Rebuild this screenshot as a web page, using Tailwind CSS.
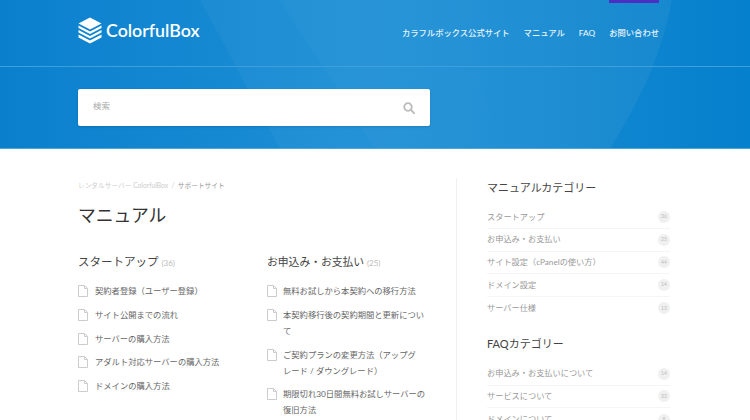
<!DOCTYPE html>
<html lang="ja">
<head>
<meta charset="UTF-8">
<title>マニュアル - ColorfulBox</title>
<script src="https://cdn.jsdelivr.net/npm/@tailwindcss/browser@4"></script>
</head>
<body class="h-[420px] overflow-hidden bg-white font-['Lato','Noto_Sans_CJK_JP',sans-serif]">

<!-- hero -->
<header class="relative h-[149px] overflow-hidden bg-gradient-to-r from-[#0a80cd] via-[#1c8fd6] to-[#0580cc] border-b border-[#4aa8e0]">
  <svg class="absolute inset-0" width="750" height="149" viewBox="0 0 750 149" fill="none">
    <path d="M200 0L280 149H610C640 100 660 60 672 0Z" fill="#fff" fill-opacity="0.035"/>
    <path d="M280 0L375 149H500L450 0Z" fill="#fff" fill-opacity="0.02"/>
    <path d="M450 0C470 60 480 100 500 149H610C640 100 665 50 672 0Z" fill="#fff" fill-opacity="0.02"/>
  </svg>
  <div class="relative h-[67px] border-b border-[#3d9fdc]">
    <div class="flex h-full items-center justify-between pl-[78px] pr-[91px]">
      <a class="mb-[5px] flex items-center gap-[4px] text-white" href="#">
        <svg width="24" height="27" viewBox="0 0 24 27" fill="none">
          <path d="M12 0.5L23.5 6.5L12 12.5L0.5 6.5Z" fill="#fff"/>
          <path d="M0.5 8.5L12 14.5L23.5 8.5V11L12 17L0.5 11Z" fill="#fff"/>
          <path d="M0.5 13L12 19L23.5 13V15.5L12 21.5L0.5 15.5Z" fill="#fff"/>
          <path d="M0.5 17.5L12 23.5L23.5 17.5V20.5L12 26.5L0.5 20.5Z" fill="#fff"/>
        </svg>
        <span class="text-[17.8px] font-semibold leading-none">ColorfulBox</span>
      </a>
      <nav class="flex gap-[14px] text-[8.3px] font-medium text-white/90">
        <a href="#">カラフルボックス公式サイト</a>
        <a href="#">マニュアル</a>
        <a href="#">FAQ</a>
        <a href="#">お問い合わせ</a>
      </nav>
    </div>
    <div class="absolute right-[91px] top-0 h-[3px] w-[50px] bg-[#4a2fc0]"></div>
  </div>
  <div class="relative pl-[78px] pt-[22px]">
    <div class="flex h-[37px] w-[352px] items-center justify-between rounded-[2px] bg-white pl-[15px] pr-[15px] shadow-sm">
      <span class="mb-[3px] text-[8.5px] text-[#aaa]">検索</span>
      <svg class="mt-[1px]" width="12" height="12" viewBox="0 0 12 12" fill="none" stroke="#bbb" stroke-width="1.8">
        <circle cx="5" cy="5" r="3.8"/>
        <path d="M8 8L11.3 11.3" stroke-linecap="round"/>
      </svg>
    </div>
  </div>
</header>

<div class="flex pl-[78px]">
  <!-- main column -->
  <main class="mt-[29px] h-[242px] w-[379px] overflow-hidden border-r border-[#f0f0f0] pt-[1px]">
    <p class="text-[6.7px] leading-[12px] text-[#ccc]">レンタルサーバー ColorfulBox &nbsp;/&nbsp; <span class="text-[#999]">サポートサイト</span></p>
    <h1 class="mt-[10px] text-[17.8px] leading-[28px] text-[#333]">マニュアル</h1>
    <div class="mt-[23px] grid grid-cols-[189px_160px] text-[8.3px] text-[#666]">
      <section>
        <h2 class="text-[11.5px] leading-[20px] text-[#444]">スタートアップ <span class="text-[8px] text-[#bbb]">(36)</span></h2>
        <ul class="mt-[10px] flex flex-col gap-[7.75px] leading-[16px]">
          <li class="flex gap-[7px]"><svg class="mt-[2px] shrink-0" width="10" height="12" viewBox="0 0 10 12" fill="none" stroke="#ccc"><path d="M.5.5H6.5L9.5 3.5V11.5H.5ZM6.5.5V3.5H9.5"/></svg>契約者登録（ユーザー登録）</li>
          <li class="flex gap-[7px]"><svg class="mt-[2px] shrink-0" width="10" height="12" viewBox="0 0 10 12" fill="none" stroke="#ccc"><path d="M.5.5H6.5L9.5 3.5V11.5H.5ZM6.5.5V3.5H9.5"/></svg>サイト公開までの流れ</li>
          <li class="flex gap-[7px]"><svg class="mt-[2px] shrink-0" width="10" height="12" viewBox="0 0 10 12" fill="none" stroke="#ccc"><path d="M.5.5H6.5L9.5 3.5V11.5H.5ZM6.5.5V3.5H9.5"/></svg>サーバーの購入方法</li>
          <li class="flex gap-[7px]"><svg class="mt-[2px] shrink-0" width="10" height="12" viewBox="0 0 10 12" fill="none" stroke="#ccc"><path d="M.5.5H6.5L9.5 3.5V11.5H.5ZM6.5.5V3.5H9.5"/></svg>アダルト対応サーバーの購入方法</li>
          <li class="flex gap-[7px]"><svg class="mt-[2px] shrink-0" width="10" height="12" viewBox="0 0 10 12" fill="none" stroke="#ccc"><path d="M.5.5H6.5L9.5 3.5V11.5H.5ZM6.5.5V3.5H9.5"/></svg>ドメインの購入方法</li>
        </ul>
      </section>
      <section>
        <h2 class="text-[10.8px] leading-[20px] text-[#444]">お申込み・お支払い <span class="text-[8px] text-[#bbb]">(25)</span></h2>
        <ul class="mt-[10px] flex flex-col gap-[7.75px] leading-[16px]">
          <li class="flex gap-[6px]"><svg class="mt-[2px] shrink-0" width="10" height="12" viewBox="0 0 10 12" fill="none" stroke="#ccc"><path d="M.5.5H6.5L9.5 3.5V11.5H.5ZM6.5.5V3.5H9.5"/></svg>無料お試しから本契約への移行方法</li>
          <li class="flex gap-[6px]"><svg class="mt-[2px] shrink-0" width="10" height="12" viewBox="0 0 10 12" fill="none" stroke="#ccc"><path d="M.5.5H6.5L9.5 3.5V11.5H.5ZM6.5.5V3.5H9.5"/></svg>本契約移行後の契約期間と更新について</li>
          <li class="flex gap-[6px]"><svg class="mt-[2px] shrink-0" width="10" height="12" viewBox="0 0 10 12" fill="none" stroke="#ccc"><path d="M.5.5H6.5L9.5 3.5V11.5H.5ZM6.5.5V3.5H9.5"/></svg><span>ご契約プランの変更方法（アップグ<br>レード / ダウングレード）</span></li>
          <li class="flex gap-[6px]"><svg class="mt-[2px] shrink-0" width="10" height="12" viewBox="0 0 10 12" fill="none" stroke="#ccc"><path d="M.5.5H6.5L9.5 3.5V11.5H.5ZM6.5.5V3.5H9.5"/></svg>期限切れ30日間無料お試しサーバーの復旧方法</li>
        </ul>
      </section>
    </div>
  </main>

  <!-- sidebar -->
  <aside class="h-[271px] w-[213px] overflow-hidden pl-[30px] pt-[30px] text-[8.2px] text-[#999]">
    <h3 class="text-[11px] leading-[18px] text-[#444]">マニュアルカテゴリー</h3>
    <ul class="mt-[9px]">
      <li class="flex h-[22.75px] items-center justify-between border-b border-[#f5f5f5]">スタートアップ<span class="flex size-[12px] items-center justify-center rounded-full bg-[#f0f0f0] text-[5px] text-[#bbb]">36</span></li>
      <li class="flex h-[22.75px] items-center justify-between border-b border-[#f5f5f5]">お申込み・お支払い<span class="flex size-[12px] items-center justify-center rounded-full bg-[#f0f0f0] text-[5px] text-[#bbb]">25</span></li>
      <li class="flex h-[22.75px] items-center justify-between border-b border-[#f5f5f5]">サイト設定（cPanelの使い方）<span class="flex size-[12px] items-center justify-center rounded-full bg-[#f0f0f0] text-[5px] text-[#bbb]">44</span></li>
      <li class="flex h-[22.75px] items-center justify-between border-b border-[#f5f5f5]">ドメイン設定<span class="flex size-[12px] items-center justify-center rounded-full bg-[#f0f0f0] text-[5px] text-[#bbb]">14</span></li>
      <li class="flex h-[22.75px] items-center justify-between">サーバー仕様<span class="flex size-[12px] items-center justify-center rounded-full bg-[#f0f0f0] text-[5px] text-[#bbb]">13</span></li>
    </ul>
    <h3 class="mt-[15px] text-[11px] leading-[18px] text-[#444]">FAQカテゴリー</h3>
    <ul class="mt-[10px]">
      <li class="flex h-[22.75px] items-center justify-between border-b border-[#f5f5f5]">お申込み・お支払いについて<span class="flex size-[12px] items-center justify-center rounded-full bg-[#f0f0f0] text-[5px] text-[#bbb]">14</span></li>
      <li class="flex h-[22.75px] items-center justify-between border-b border-[#f5f5f5]">サービスについて<span class="flex size-[12px] items-center justify-center rounded-full bg-[#f0f0f0] text-[5px] text-[#bbb]">32</span></li>
      <li class="flex h-[22.75px] items-center justify-between">ドメインについて<span class="flex size-[12px] items-center justify-center rounded-full bg-[#f0f0f0] text-[5px] text-[#bbb]">8</span></li>
    </ul>
  </aside>
</div>
</body>
</html>
